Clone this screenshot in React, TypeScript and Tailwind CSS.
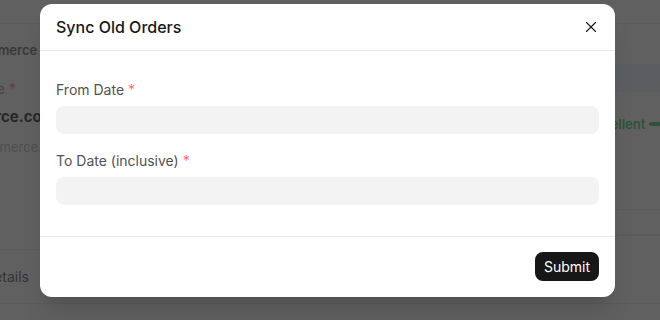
import { X } from "lucide-react";

function Field({ label }: { label: string }) {
  return (
    <div>
      <label className="mb-1.5 block text-sm leading-5 text-[#525252]">
        {label} <span className="text-[#f87171]">*</span>
      </label>
      <input className="block h-7 w-full rounded-lg bg-[#f3f3f3] px-2 text-sm outline-none" />
    </div>
  );
}

export default function App() {
  return (
    <div className="relative h-[320px] w-[660px] overflow-hidden bg-white font-['Inter',sans-serif]">
      {/* page behind the dialog */}
      <div className="h-6 border-b border-gray-200" />
      <div className="flex">
        <div className="w-[615px] shrink-0 overflow-hidden">
          <div className="flex h-[226px] flex-col border-b border-gray-200">
            <div className="-ml-[60px] mt-[18px] whitespace-nowrap text-[13px] font-semibold leading-4 text-[#525252]">
              WooCommerce
            </div>
            <div className="-ml-[20px] mt-[21px] whitespace-nowrap text-sm leading-5 text-[#8a8a8a]">
              Site <span className="text-[#f87171]">*</span>
            </div>
            <div className="-ml-[90px] mt-[8px] whitespace-nowrap text-[15px] font-bold leading-5 text-[#0a0a0a]">
              woocommerce.com
            </div>
            <div className="-ml-[53px] mt-[12px] whitespace-nowrap text-[13px] leading-4 text-[#b5b5b5]">
              woocommerce.com
            </div>
          </div>
          <div className="flex h-[54px] items-center border-b border-gray-200">
            <span className="-ml-[16px] whitespace-nowrap text-sm leading-5 text-[#404040]">
              Details <span className="ml-2">:</span>
            </span>
          </div>
        </div>
        <div className="min-w-0 flex-1 overflow-hidden">
          <div className="mt-10 h-[28px] bg-[#eef2ff]" />
          <div className="mt-[24px] flex items-center gap-1 whitespace-nowrap text-[13px] font-semibold leading-4 text-[#22c55e]">
            <span className="-ml-[27px]">Excellent</span>
            <span className="h-1 w-4 shrink-0 rounded-full bg-[#22c55e]" />
          </div>
          <div className="mt-[77px] h-[26px] border-y border-gray-200" />
          <div className="h-[69px] border-y border-gray-200" />
        </div>
      </div>

      {/* overlay */}
      <div className="absolute inset-0 bg-[#303030]/[0.77]" />

      {/* dialog */}
      <div className="absolute left-[40px] top-[4px] w-[575px] rounded-xl bg-white shadow-xl">
        <div className="flex h-[47px] items-center justify-between border-b border-gray-200 pl-4 pr-[15px]">
          <h2 className="text-base font-medium text-[#171717]">Sync Old Orders</h2>
          <button className="text-[#171717]">
            <X size={18} strokeWidth={1.5} />
          </button>
        </div>
        <div className="space-y-[17px] px-4 pb-[31px] pt-[29px]">
          <Field label="From Date" />
          <Field label="To Date (inclusive)" />
        </div>
        <div className="flex justify-end border-t border-gray-200 px-4 pb-4 pt-[15px]">
          <button className="h-[29px] rounded-lg bg-[#171717] px-[9px] text-sm text-white">
            Submit
          </button>
        </div>
      </div>
    </div>
  );
}
